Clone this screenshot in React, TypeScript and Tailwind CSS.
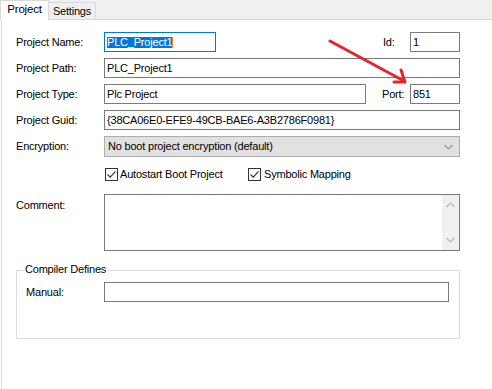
import React from "react";

function Input({ w, children, focused }: { w: string; children?: React.ReactNode; focused?: boolean }) {
  return (
    <div
      className={`${w} h-[20px] border ${focused ? "border-[#0078d7]" : "border-[#7a7a7a]"} bg-white px-[2px] flex items-center leading-[13px] whitespace-nowrap overflow-hidden`}
    >
      {children}
    </div>
  );
}

function Check() {
  return (
    <div className="w-[13px] h-[13px] border border-[#333333] bg-white flex items-center justify-center shrink-0">
      <svg width="11" height="11" viewBox="0 0 11 11">
        <path d="M1.5 5.5 L4.2 8.2 L9.5 2.3" fill="none" stroke="#333333" strokeWidth="1.2" />
      </svg>
    </div>
  );
}

export default function App() {
  return (
    <div className="w-[492px] h-[389px] bg-white relative overflow-hidden text-[11px] tracking-[-0.2px] text-black font-['Liberation_Sans',Arial,sans-serif]">
      {/* Tab strip */}
      <div className="h-[20px] bg-[#f0f0f0] border-b border-[#d9d9d9] flex items-end">
        <div className="w-[49px] h-[20px] -mb-px bg-white border-l border-t border-r border-[#d9d9d9] flex items-start justify-center pt-[2px] leading-[13px] text-[11.5px]">
          Project
        </div>
        <div className="w-[47px] h-[17px] bg-[#f0f0f0] border-t border-r border-[#d9d9d9] flex items-center justify-center leading-[13px]">
          Settings
        </div>
      </div>

      {/* Body */}
      <div className="ml-[1px] border-l border-[#dcdcdc] h-[369px] pl-[14px] pt-[12px] flex flex-col">
        {/* Project Name */}
        <div className="flex items-center h-[20px]">
          <div className="w-[88px]">Project Name:</div>
          <Input w="w-[112px]" focused>
            <span className="bg-[#0078d7] text-white leading-[11px] h-[11px] flex items-center">PLC_Project1</span>
            <span className="w-px h-[11px] bg-[#ff8728]" />
          </Input>
          <div className="w-[167px]" />
          <div className="w-[27px]">Id:</div>
          <Input w="w-[50px]">1</Input>
        </div>

        {/* Project Path */}
        <div className="flex items-center h-[20px] mt-[6px]">
          <div className="w-[88px]">Project Path:</div>
          <Input w="w-[356px]">PLC_Project1</Input>
        </div>

        {/* Project Type */}
        <div className="flex items-center h-[20px] mt-[6px]">
          <div className="w-[88px]">Project Type:</div>
          <Input w="w-[262px]">Plc Project</Input>
          <div className="w-[16px]" />
          <div className="w-[28px]">Port:</div>
          <Input w="w-[50px]">851</Input>
        </div>

        {/* Project Guid */}
        <div className="flex items-center h-[20px] mt-[6px]">
          <div className="w-[88px]">Project Guid:</div>
          <Input w="w-[356px]">{"{38CA06E0-EFE9-49CB-BAE6-A3B2786F0981}"}</Input>
        </div>

        {/* Encryption */}
        <div className="flex items-center h-[21px] mt-[6px]">
          <div className="w-[88px]">Encryption:</div>
          <div className="w-[356px] h-[21px] border border-[#adadad] bg-[#e1e1e1] pl-[3px] pr-[6px] flex items-center justify-between leading-[13px]">
            <span>No boot project encryption (default)</span>
            <svg width="9" height="6" viewBox="0 0 9 6">
              <path d="M0.5 1 L4.5 5 L8.5 1" fill="none" stroke="#606060" strokeWidth="1" />
            </svg>
          </div>
        </div>

        {/* Checkboxes */}
        <div className="flex items-center h-[15px] mt-[10px]">
          <div className="w-[89px]" />
          <div className="w-[143px] flex items-center gap-[2px]">
            <Check />
            <span className="leading-[13px]">Autostart Boot Project</span>
          </div>
          <div className="flex items-center gap-[3px]">
            <Check />
            <span className="leading-[13px]">Symbolic Mapping</span>
          </div>
        </div>

        {/* Comment */}
        <div className="flex items-start mt-[12px]">
          <div className="w-[88px] pt-[5px] leading-[13px]">Comment:</div>
          <div className="w-[356px] h-[57px] border border-[#7a7a7a] bg-white flex justify-end">
            <div className="w-[17px] h-full bg-[#f0f0f0] flex flex-col items-center justify-between py-[7px]">
              <svg width="9" height="6" viewBox="0 0 9 6">
                <path d="M0.5 5 L4.5 1 L8.5 5" fill="none" stroke="#b5b5b5" strokeWidth="1.2" />
              </svg>
              <svg width="9" height="6" viewBox="0 0 9 6">
                <path d="M0.5 1 L4.5 5 L8.5 1" fill="none" stroke="#b5b5b5" strokeWidth="1.2" />
              </svg>
            </div>
          </div>
        </div>

        {/* Compiler Defines group */}
        <div className="relative w-[444px] h-[69px] border border-[#dcdcdc] mt-[19px]">
          <div className="absolute -top-[8px] left-[7px] bg-white px-[1px] leading-[13px]">Compiler Defines</div>
          <div className="flex items-center h-[20px] mt-[11px]">
            <div className="w-[87px] pl-[9px]">Manual:</div>
            <Input w="w-[345px]" />
          </div>
        </div>
      </div>

      {/* Red arrow annotation */}
      <svg className="absolute top-0 left-0 pointer-events-none" width="492" height="389" viewBox="0 0 492 389">
        <g stroke="#e3262e" strokeWidth="3" strokeLinecap="round" fill="none">
          <path d="M330 41 L404 81" />
          <path d="M401 70 L405 82 L394 82" strokeLinejoin="round" />
        </g>
      </svg>
    </div>
  );
}
